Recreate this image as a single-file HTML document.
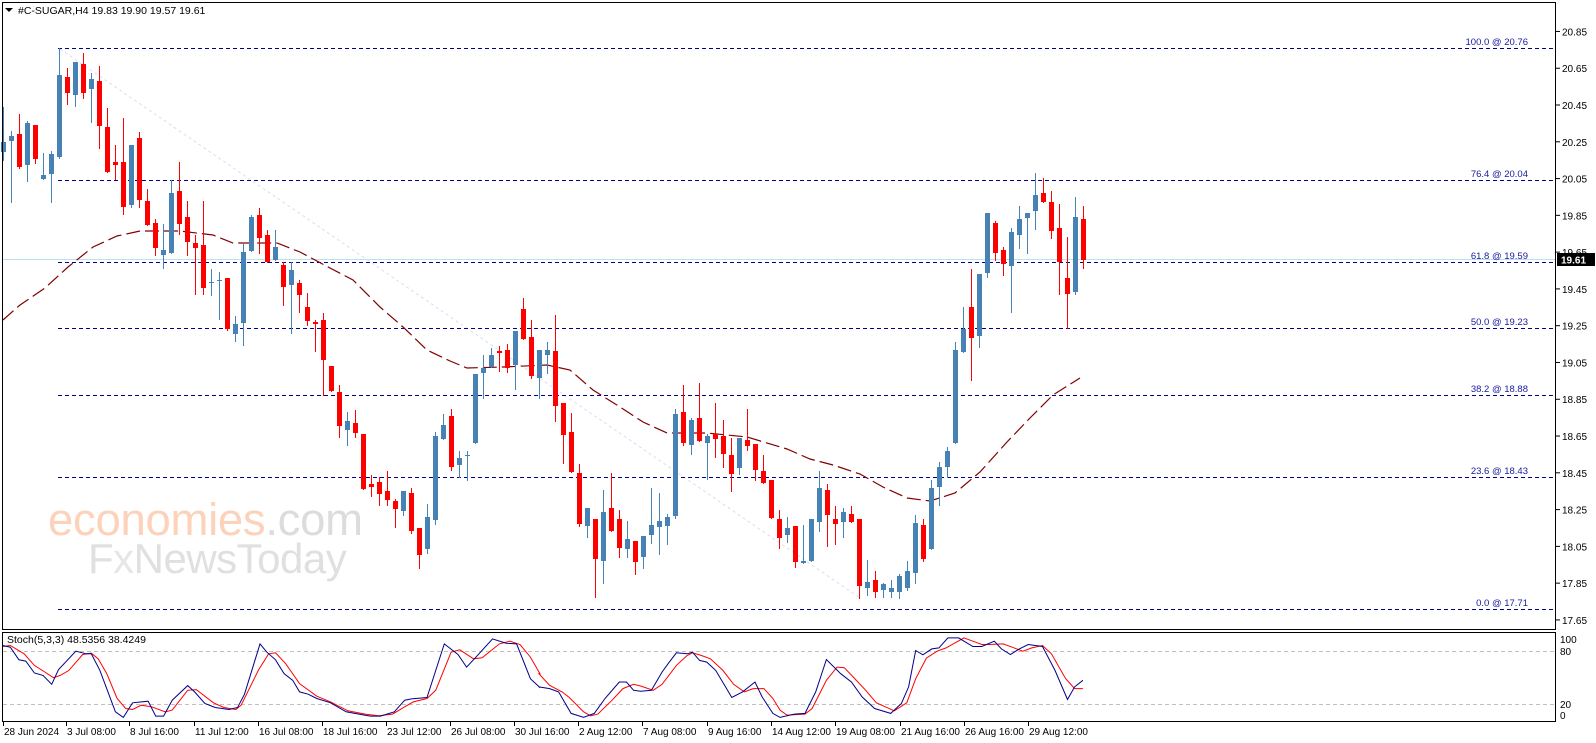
<!DOCTYPE html>
<html><head><meta charset="utf-8">
<style>
html,body{margin:0;padding:0;background:#fff;width:1596px;height:743px;overflow:hidden}
svg{display:block}
text{font-family:"Liberation Sans","DejaVu Sans",sans-serif}
</style></head>
<body>
<svg id="s" width="1596" height="743" xmlns="http://www.w3.org/2000/svg">
<rect width="1596" height="743" fill="#fff"/>
<g id="wm">
<text x="48" y="535" font-size="45.5" fill="#fcd2ba" letter-spacing="-0.3">economies<tspan fill="#dcdcdc">.com</tspan></text>
<text x="88" y="573" font-size="42" fill="#e0e0e0" letter-spacing="-0.5">F<tspan fill="#e6e6e6">x</tspan>NewsToday</text>
</g>
<g id="g"></g>
<rect x="2.5" y="2.5" width="1553" height="627" fill="none" stroke="#000" stroke-width="1"/>
<rect x="2.5" y="632.5" width="1553" height="89" fill="none" stroke="#000" stroke-width="1"/>
<polygon points="5,8 13,8 9,12" fill="#000"/>
<text x="18" y="14" font-size="10.5" fill="#000">#C-SUGAR,H4  19.83 19.90 19.57 19.61</text>
<text x="7" y="643" font-size="10.5" fill="#000">Stoch(5,3,3) 48.5356 38.4249</text>
</svg>
<script>
var NS="http://www.w3.org/2000/svg",G=document.getElementById('g');
function el(t,a,txt){var e=document.createElementNS(NS,t);for(var k in a)e.setAttribute(k,a[k]);if(txt!=null)e.textContent=txt;G.appendChild(e);return e;}
el('line',{x1:3,y1:259.5,x2:1556,y2:259.5,stroke:'#b5e3e8','stroke-width':1});
el('line',{x1:60,y1:49,x2:860,y2:598,stroke:'#dcdcf4','stroke-width':1,'stroke-dasharray':'3 3'});
var fib=[["100.0 @ 20.76",48],["76.4 @ 20.04",180],["61.8 @ 19.59",262],["50.0 @ 19.23",328],["38.2 @ 18.88",395],["23.6 @ 18.43",477],["0.0 @ 17.71",609]];
fib.forEach(function(f){el('line',{x1:58,y1:f[1]+.5,x2:1555,y2:f[1]+.5,stroke:'#00008b','stroke-width':1,'stroke-dasharray':'4 3'});
el('text',{x:1528,y:f[1]-3,'font-size':'9.5','text-anchor':'end',fill:'#1a1aa0'},f[0]);});
var ma=[[3,320],[20,305],[45,288],[68,267],[93,247],[117,236],[140,231],[180,231],[213,235],[233,243],[277,243],[300,252],[330,268],[353,280],[380,307],[403,327],[427,350],[450,361],[467,368],[503,367],[547,365],[570,370],[593,390],[620,407],[643,422],[667,433],[707,433],[747,437],[787,449],[810,459],[833,465],[860,474],[883,487],[907,498],[930,501],[955,493],[980,472],[1007,442],[1030,418],[1053,395],[1080,378]];
el('polyline',{points:ma.map(function(p){return p.join(',')}).join(' '),fill:'none',stroke:'#800000','stroke-width':1.2,'stroke-dasharray':'14 5'});
var C="b 142 152 107 160|b 136 141 131 202|r 134 167 114 168|b 123 165 121 181|r 125 159 125 163|b 175 179 153 179|b 154 174 151 202|b 75 157 48 158|r 77 93 68 104|b 62 95 62 106|r 64 93 53 98|b 79 89 73 122|r 81 126 66 148|r 127 172 108 172|r 162 165 145 179|r 162 207 118 214|b 145 205 145 207|r 138 200 132 207|r 201 225 189 225|r 223 248 219 255|b 250 255 224 268|b 193 253 180 253|r 191 224 162 234|r 217 242 201 255|r 243 248 235 294|r 245 288 201 294|b 282 283 269 295|b 280 281 272 319|r 278 329 278 330|b 324 334 316 341|b 252 323 244 345|b 217 251 215 251|r 215 238 208 253|r 235 262 230 262|b 247 260 230 260|r 265 287 262 305|b 270 285 262 333|r 283 295 280 312|r 307 321 293 325|r 322 324 320 351|r 320 360 313 395|r 366 391 366 391|r 392 426 385 437|b 421 430 412 445|r 423 433 410 437|r 434 489 434 489|r 484 487 475 496|r 482 494 477 505|r 491 500 471 505|r 501 509 499 527|b 491 511 491 515|r 493 531 488 533|r 528 555 528 568|b 517 549 504 553|b 436 520 432 524|b 425 439 414 439|r 416 467 409 470|b 458 465 451 477|b 455 456 451 480|b 374 443 374 443|b 368 373 355 398|b 355 367 348 367|r 351 353 346 371|r 350 368 344 372|b 331 365 331 389|r 309 339 298 339|r 337 376 320 378|b 350 378 350 398|b 350 355 342 373|r 351 406 315 421|r 403 435 403 463|r 432 472 413 472|r 473 524 464 526|b 508 526 508 537|r 519 559 519 597|b 512 561 490 583|r 508 531 473 531|r 519 548 510 557|b 539 549 521 557|r 541 562 541 574|b 536 557 536 568|b 525 535 488 543|b 521 527 493 554|b 517 526 514 544|b 414 516 409 518|r 412 443 385 445|b 420 445 418 454|r 418 441 383 441|b 436 443 434 479|r 434 439 403 457|r 436 454 420 467|r 455 474 438 491|b 438 468 438 474|r 440 446 409 450|r 444 470 444 480|r 471 483 455 483|r 480 518 480 518|r 519 538 510 548|b 528 535 517 542|r 526 562 526 567|b 561 563 525 563|b 519 561 519 561|b 488 522 471 531|r 490 515 484 546|r 519 524 506 544|b 512 522 508 537|r 514 522 506 522|r 519 586 519 598|b 582 588 560 595|r 580 592 571 597|b 584 590 583 597|b 588 592 580 597|b 576 592 574 598|b 571 588 561 590|b 523 573 515 583|r 525 559 519 561|b 488 549 480 549|b 467 487 462 505|b 451 467 447 477|b 350 443 342 443|b 329 352 307 352|r 307 338 269 380|b 274 336 274 347|b 213 273 213 277|r 223 253 221 260|r 250 264 247 275|b 232 266 228 312|b 219 235 206 248|b 213 218 213 253|b 195 211 173 229|r 193 202 178 202|r 202 231 191 238|r 228 262 204 294|r 278 294 237 328|b 217 292 197 294|r 219 260 206 268".split('|');
C.forEach(function(s,i){var a=s.split(' '),col=a[0]=='b'?'#4682b4':'#ff0000',x=3+8*i;
var t=+a[1],b=+a[2],wt=+a[3],wb=+a[4];
el('line',{x1:x+.5,y1:wt,x2:x+.5,y2:wb+1,stroke:col,'stroke-width':1});
el('rect',{x:x-2,y:t,width:5,height:Math.max(1,b-t),fill:col});});
for(var k=0;k<17;k++){var p=20.85-0.2*k,y=48+(20.76-p)*183.9;
el('line',{x1:1556,y1:y,x2:1560,y2:y,stroke:'#000'});
el('text',{x:1562,y:y+4,'font-size':'10',fill:'#000'},p.toFixed(2));}
el('rect',{x:1557,y:253,width:38,height:13,fill:'#000'});
el('text',{x:1561,y:263.5,'font-size':'10','font-weight':'bold',fill:'#fff'},'19.61');
el('line',{x1:3,y1:651.5,x2:1555,y2:651.5,stroke:'#c0c0c0','stroke-dasharray':'4 3'});
el('line',{x1:3,y1:704.5,x2:1555,y2:704.5,stroke:'#c0c0c0','stroke-dasharray':'4 3'});
[['100',639],['80',651],['20',704],['0',715]].forEach(function(l){el('text',{x:1560,y:l[1]+4,'font-size':'10',fill:'#000'},l[0]);});
function conv(arr,ox,sx){return arr.map(function(p){return (ox+p[0]/sx).toFixed(1)+','+(651.5+(p[1]-93)*53/160).toFixed(1)}).join(' ');}
var b1=[[8,75],[30,80],[55,118],[75,122],[100,158],[125,165],[150,192],[170,148],[220,92],[250,100],[265,100],[290,150],[335,275],[358,292],[385,248],[430,243],[452,288],[475,288],[500,240],[545,196],[565,215],[595,250],[625,262],[665,268],[690,262],[710,222],[755,70],[775,95],[800,118],[825,160],[850,180],[870,215],[895,222],[920,235],[960,248],[1005,275],[1030,280],[1075,288],[1105,288],[1145,275],[1175,240],[1195,236],[1240,232],[1290,70],[1330,102],[1355,140],[1380,112],[1430,55],[1470,68],[1500,70],[1540,175],[1568,202]];
var r1=[[8,78],[30,75],[70,100],[100,135],[130,155],[155,172],[175,165],[200,150],[240,102],[265,98],[285,115],[310,160],[340,235],[365,265],[385,268],[410,255],[440,260],[480,275],[500,270],[545,210],[570,208],[620,248],[650,262],[685,268],[700,255],[750,150],[780,100],[800,97],[830,130],[870,190],[920,228],[960,245],[1010,272],[1060,282],[1100,287],[1140,282],[1175,260],[1200,245],[1240,235],[1265,210],[1310,95],[1335,88],[1375,115],[1400,112],[1450,70],[1480,62],[1510,72],[1540,110],[1568,160]];
var b2=[[25,200],[55,205],[80,215],[115,280],[150,292],[180,280],[210,235],[250,185],[270,185],[290,210],[310,213],[340,210],[370,155],[390,125],[410,97],[440,100],[455,95],[475,120],[495,125],[520,150],[545,195],[565,232],[595,215],[630,185],[650,230],[680,280],[700,292],[740,282],[770,280],[800,215],[830,117],[870,160],[900,185],[930,230],[965,265],[1010,280],[1040,250],[1060,200],[1080,90],[1100,103],[1125,85],[1145,82],[1170,52],[1200,52],[1240,78],[1265,78],[1300,62],[1320,85],[1345,102],[1370,85],[1395,72],[1435,78],[1470,150],[1505,238],[1525,200],[1548,180]];
var r2=[[25,160],[55,195],[90,215],[110,232],[150,275],[170,287],[190,282],[230,240],[260,205],[290,192],[310,197],[345,210],[370,192],[410,135],[440,105],[455,97],[480,105],[505,115],[540,150],[570,192],[600,215],[625,205],[655,205],[680,235],[700,270],[720,285],[770,282],[790,265],[830,180],[860,140],[880,142],[905,170],[940,210],[970,248],[1020,272],[1055,248],[1080,175],[1110,113],[1140,92],[1165,82],[1215,52],[1240,62],[1265,72],[1285,72],[1325,70],[1350,80],[1380,92],[1405,82],[1435,75],[1460,100],[1500,175],[1525,205],[1548,205]];
var SX1=1568/540,SX2=1568/560;
el('polyline',{points:conv(r1,0,SX1)+' '+conv(r2,530,SX2),fill:'none',stroke:'#ff0000','stroke-width':1});
el('polyline',{points:conv(b1,0,SX1)+' '+conv(b2,530,SX2),fill:'none',stroke:'#00008b','stroke-width':1});
var tl=[["28 Jun 2024",3],["3 Jul 08:00",66],["8 Jul 16:00",129],["11 Jul 12:00",194],["16 Jul 08:00",258],["18 Jul 16:00",322],["23 Jul 12:00",386],["26 Jul 08:00",450],["30 Jul 16:00",514],["2 Aug 12:00",578],["7 Aug 08:00",642],["9 Aug 16:00",707],["14 Aug 12:00",771],["19 Aug 08:00",835],["21 Aug 16:00",900],["26 Aug 16:00",964],["29 Aug 12:00",1028]];
tl.forEach(function(t){el('line',{x1:t[1]+.5,y1:722,x2:t[1]+.5,y2:726,stroke:'#000'});
el('text',{x:t[1]+1,y:735,'font-size':'10',fill:'#000'},t[0]);});
</script>
</body></html>
